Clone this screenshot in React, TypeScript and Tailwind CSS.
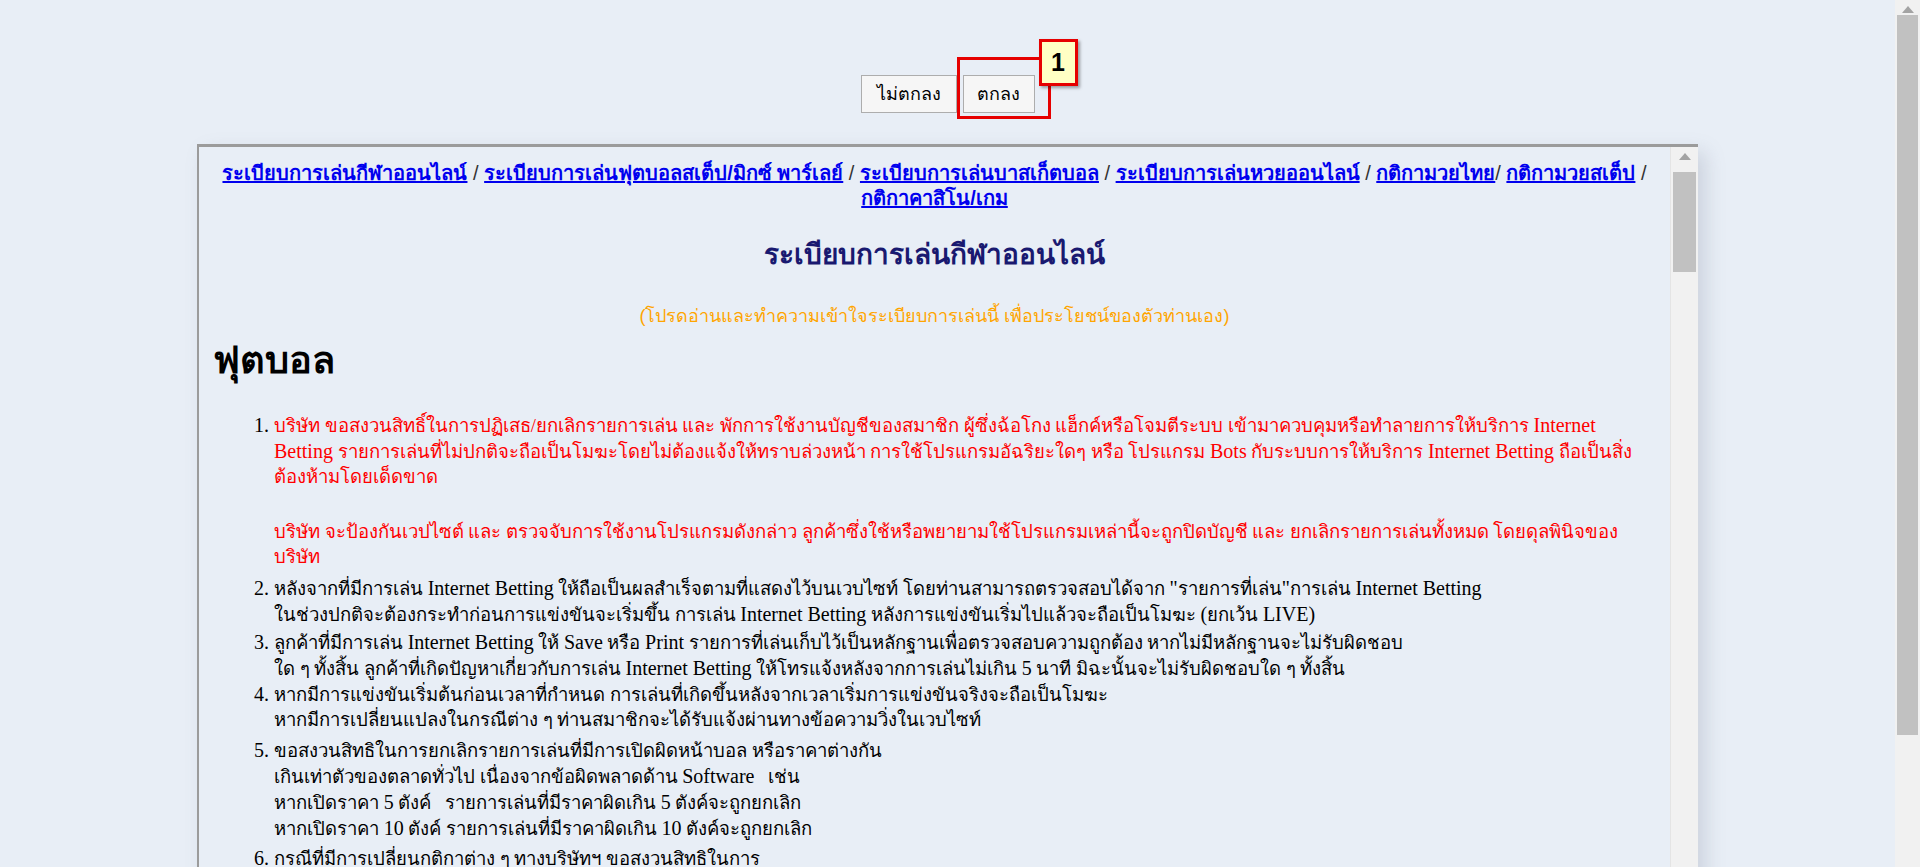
import React from "react"

const links = [
  "ระเบียบการเล่นกีฬาออนไลน์",
  "ระเบียบการเล่นฟุตบอลสเต็ป/มิกซ์ พาร์เลย์",
  "ระเบียบการเล่นบาสเก็ตบอล",
  "ระเบียบการเล่นหวยออนไลน์",
  "กติกามวยไทย",
  "กติกามวยสเต็ป",
  "กติกาคาสิโน/เกม",
]

// latin words are set a little larger than the thai text around them
function L({ children }: { children: React.ReactNode }) {
  return <span className="text-[20px] leading-[25px]">{children}</span>
}

function ScrollBar({ thumbTop, thumbHeight }: { thumbTop: string; thumbHeight: string }) {
  return (
    <div className="relative flex h-full w-full flex-col items-center bg-[#f1f1f1]">
      <svg width="12" height="7" viewBox="0 0 12 7" className="mt-[6px] shrink-0">
        <path d="M0 7 L6 0 L12 7 Z" fill="#a3a3a3" />
      </svg>
      <div className={`absolute left-[2px] right-[2px] bg-[#c1c1c1] ${thumbTop} ${thumbHeight}`} />
    </div>
  )
}

function Rules() {
  return (
    <ol className="list-decimal pl-[75px] pr-[16px] text-[18.5px] leading-[25px] text-black marker:text-[20px] marker:text-black">
      <li className="text-[#ff0000]">
        บริษัท ขอสงวนสิทธิ์ในการปฏิเสธ/ยกเลิกรายการเล่น และ พักการใช้งานบัญชีของสมาชิก ผู้ซึ่งฉ้อโกง แฮ็กค์หรือโจมตีระบบ
        เข้ามาควบคุมหรือทำลายการให้บริการ <L>Internet Betting</L> รายการเล่นที่ไม่ปกติจะถือเป็นโมฆะโดยไม่ต้องแจ้งให้ทราบล่วงหน้า
        การใช้โปรแกรมอัฉริยะใดๆ หรือ โปรแกรม <L>Bots</L> กับระบบการให้บริการ <L>Internet Betting</L> ถือเป็นสิ่งต้องห้ามโดยเด็ดขาด
        <br />
        <br />
        <span className="inline-block pt-[5px]">
          บริษัท จะป้องกันเวปไซต์ และ ตรวจจับการใช้งานโปรแกรมดังกล่าว ลูกค้าซึ่งใช้หรือพยายามใช้โปรแกรมเหล่านี้จะถูกปิดบัญชี และ
          ยกเลิกรายการเล่นทั้งหมด โดยดุลพินิจของบริษัท
        </span>
      </li>
      <li className="mt-[6px]">
        หลังจากที่มีการเล่น <L>Internet Betting</L> ให้ถือเป็นผลสำเร็จตามที่แสดงไว้บนเวบไซท์ โดยท่านสามารถตรวจสอบได้จาก{" "}
        <L>"</L>รายการที่เล่น<L>"</L>การเล่น <L>Internet Betting</L>
        <br />
        ในช่วงปกติจะต้องกระทำก่อนการแข่งขันจะเริ่มขึ้น การเล่น <L>Internet Betting</L> หลังการแข่งขันเริ่มไปแล้วจะถือเป็นโมฆะ{" "}
        <L>(</L>ยกเว้น <L>LIVE)</L>
      </li>
      <li className="mt-[2px]">
        ลูกค้าที่มีการเล่น <L>Internet Betting</L> ให้ <L>Save</L> หรือ <L>Print</L>{" "}
        รายการที่เล่นเก็บไว้เป็นหลักฐานเพื่อตรวจสอบความถูกต้อง หากไม่มีหลักฐานจะไม่รับผิดชอบ
        <br />
        ใด ๆ ทั้งสิ้น ลูกค้าที่เกิดปัญหาเกี่ยวกับการเล่น <L>Internet Betting</L> ให้โทรแจ้งหลังจากการเล่นไม่เกิน <L>5</L> นาที
        มิฉะนั้นจะไม่รับผิดชอบใด ๆ ทั้งสิ้น
      </li>
      <li className="mt-[0px]">
        หากมีการแข่งขันเริ่มต้นก่อนเวลาที่กำหนด การเล่นที่เกิดขึ้นหลังจากเวลาเริ่มการแข่งขันจริงจะถือเป็นโมฆะ
        <br />
        หากมีการเปลี่ยนแปลงในกรณีต่าง ๆ ท่านสมาชิกจะได้รับแจ้งผ่านทางข้อความวิ่งในเวบไซท์
      </li>
      <li className="mt-[4px] leading-[26px]">
        ขอสงวนสิทธิในการยกเลิกรายการเล่นที่มีการเปิดผิดหน้าบอล หรือราคาต่างกัน
        <br />
        เกินเท่าตัวของตลาดทั่วไป เนื่องจากข้อผิดพลาดด้าน <L>Software</L> &nbsp; เช่น
        <br />
        หากเปิดราคา <L>5</L> ตังค์ &nbsp; รายการเล่นที่มีราคาผิดเกิน <L>5</L> ตังค์จะถูกยกเลิก
        <br />
        หากเปิดราคา <L>10</L> ตังค์ รายการเล่นที่มีราคาผิดเกิน <L>10</L> ตังค์จะถูกยกเลิก
      </li>
      <li className="mt-[4px]">
        กรณีที่มีการเปลี่ยนกติกาต่าง ๆ ทางบริษัทฯ ขอสงวนสิทธิในการ
        <br />
        เปลี่ยนแปลงโดยไม่ต้องแจ้งให้ทราบล่วงหน้า
      </li>
      <li className="mt-[4px]">ผลการแข่งขันจะยึดถือตามผลที่ประกาศในเวบไซท์ของบริษัทเท่านั้น</li>
    </ol>
  )
}

export default function App() {
  return (
    <div className="flex h-[867px] overflow-hidden bg-[#e8eef6] font-['Liberation_Serif',serif]">
      <div className="flex-1">
        {/* confirm buttons */}
        <div className="flex justify-center gap-[6px] pt-[75px] font-['Liberation_Sans',sans-serif]">
          <button className="h-[38px] w-[96px] border border-[#adadad] bg-[#f6f6f6] text-[18px] text-black">
            ไม่ตกลง
          </button>
          <div className="relative">
            <button className="h-[38px] w-[72px] border border-[#adadad] bg-[#f6f6f6] text-[18px] text-black">
              ตกลง
            </button>
            <div className="pointer-events-none absolute left-[-6px] top-[-18px] h-[62px] w-[94px] border-[3px] border-[#e60000]" />
            <div className="pointer-events-none absolute left-[76px] top-[-36px] flex h-[47px] w-[39px] items-center justify-center border-[3px] border-[#e60000] bg-[#ffffc4] font-['Liberation_Sans',sans-serif] text-[25px] font-bold text-black shadow-[2px_2px_3px_rgba(0,0,0,0.35)]">
              1
            </div>
          </div>
        </div>

        {/* rules box */}
        <div className="mx-auto mt-[31px] flex h-[760px] w-[1501px] border-l-[2px] border-t-[3px] border-[#9b9b9b] bg-[#e8eef6] shadow-[8px_8px_18px_rgba(110,120,140,0.22)]">
          <div className="flex-1 overflow-hidden">
            <div className="px-[14px] pt-[14px] text-center font-['Liberation_Sans',sans-serif] text-[20px] leading-[25px] text-[#333]">
              {links.map((l, i) => (
                <React.Fragment key={l}>
                  <a href="#" className="font-bold text-[#0000ee] underline">
                    {l}
                  </a>
                  {i < links.length - 1 ? (i === 4 ? "/ " : " / ") : ""}
                </React.Fragment>
              ))}
            </div>

            <h2 className="mt-[27px] text-center font-['Liberation_Sans',sans-serif] text-[28px] font-bold leading-[34px] text-[#191970]">
              ระเบียบการเล่นกีฬาออนไลน์
            </h2>
            <p className="mt-[32px] text-center font-['Liberation_Sans',sans-serif] text-[18px] leading-[25px] text-[#ffa500]">
              (โปรดอ่านและทำความเข้าใจระเบียบการเล่นนี้ เพื่อประโยชน์ของตัวท่านเอง)
            </p>
            <h1 className="mt-[9px] pl-[14px] font-['Liberation_Sans',sans-serif] text-[38px] font-bold leading-[44px] text-black">
              ฟุตบอล
            </h1>
            <div className="mt-[31px]">
              <Rules />
            </div>
          </div>
          <div className="w-[28px] border-l border-[#e4e4e4]">
            <ScrollBar thumbTop="top-[25px]" thumbHeight="h-[100px]" />
          </div>
        </div>
      </div>

      {/* page scrollbar */}
      <div className="w-[25px]">
        <ScrollBar thumbTop="top-[15px]" thumbHeight="h-[720px]" />
      </div>
    </div>
  )
}
